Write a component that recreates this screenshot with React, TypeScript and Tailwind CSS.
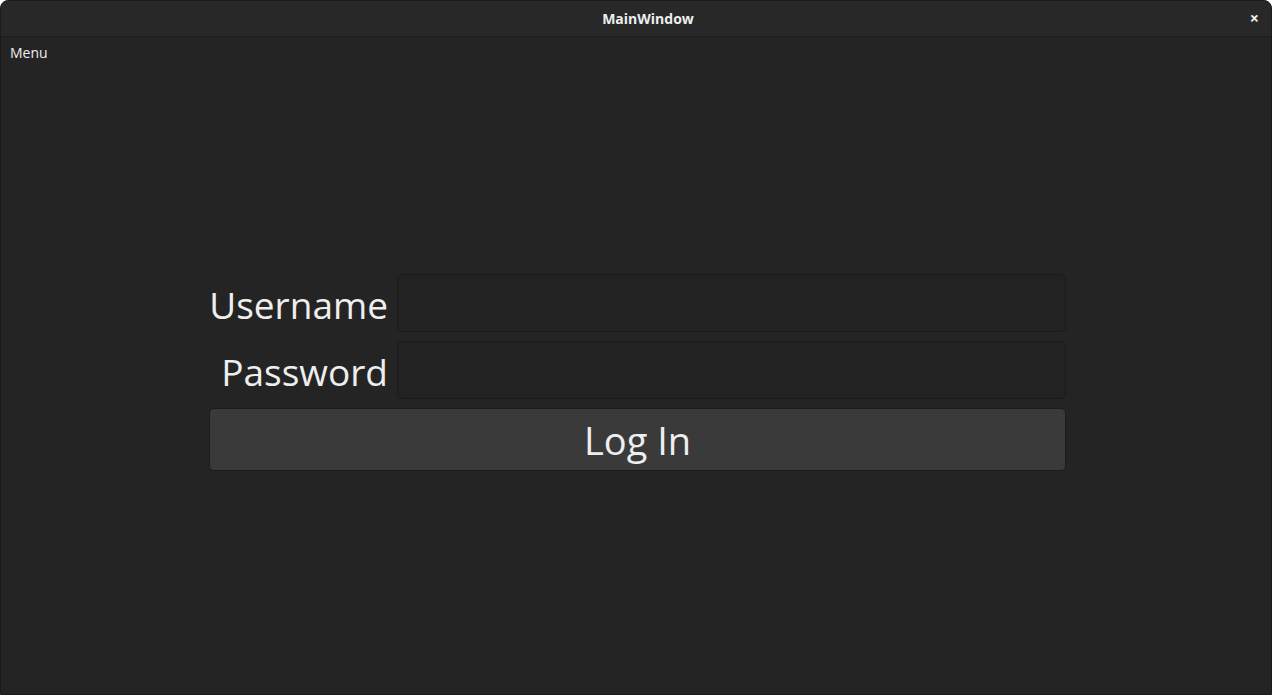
import React from "react";

export default function App() {
  return (
    <div
      className="w-[1272px] h-[695px] bg-[#242424] flex flex-col overflow-hidden rounded-t-[8px] border border-[#1b1b1b] text-[#eeeeee]"
      style={{ fontFamily: '"Open Sans", "Noto Sans", sans-serif' }}
    >
      <div className="h-[36px] shrink-0 bg-[#282828] border-b border-[#1f1f1f] flex items-center justify-center relative pl-[24px]">
        <span className="text-[14px] font-bold text-[#eeeeee]">MainWindow</span>
        <span className="absolute right-[12px] top-[8px] text-[16px] font-bold leading-[18px]">×</span>
      </div>
      <div className="h-[30px] shrink-0 flex items-center px-[9px]">
        <span className="text-[14px] text-[#eeeeee]">Menu</span>
      </div>
      <div className="pt-[207px] pl-[207px] flex flex-col gap-[9px] w-[1065px]">
        <div className="flex items-center gap-[9px]">
          <label className="w-[180px] text-right text-[37px] leading-none text-[#eeeeee] pt-[3px] whitespace-nowrap">Username</label>
          <div className="flex-1 h-[58px] rounded-[5px] bg-[#222222] border border-[#1b1b1b]" />
        </div>
        <div className="flex items-center gap-[9px]">
          <label className="w-[180px] text-right text-[37px] leading-none text-[#eeeeee] pt-[3px] whitespace-nowrap">Password</label>
          <div className="flex-1 h-[58px] rounded-[5px] bg-[#222222] border border-[#1b1b1b]" />
        </div>
        <button className="ml-[1px] h-[63px] rounded-[5px] bg-[#3a3a3a] border border-[#1c1c1c] text-[38px] text-[#eeeeee] flex items-center justify-center pt-[2px]">
          Log In
        </button>
      </div>
    </div>
  );
}
